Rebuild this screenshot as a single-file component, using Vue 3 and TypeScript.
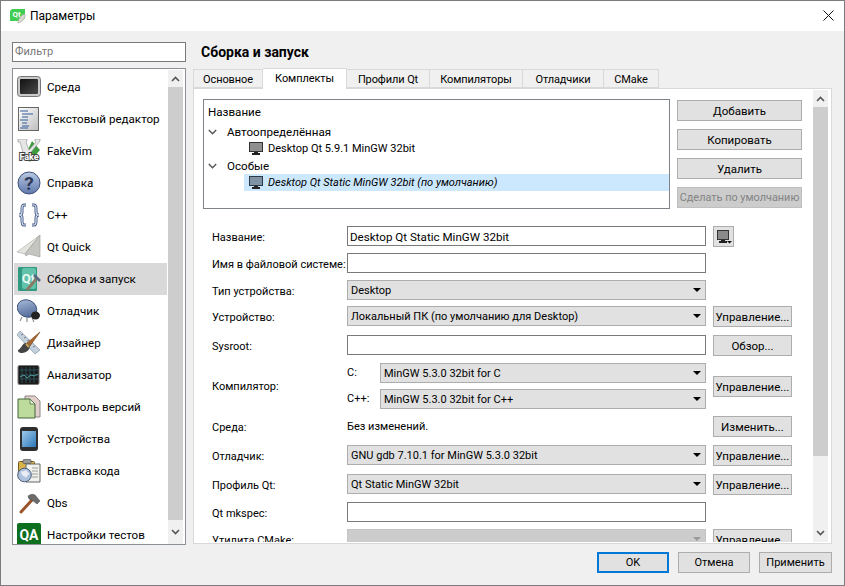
<template>
  <div class="window">
    <div class="titlebar">
      <svg class="app-icon" width="16" height="16" viewBox="0 0 16 16">
        <path d="M2 1h13v9l-3 3H0V3z" fill="#41cd52" />
        <text x="2.5" y="9" class="app-icon-text">Qt</text>
        <path d="M15 6c1 3-2 8-7 9 0-4 3-8 7-9z" fill="#d8d8d0" stroke="#a9a9a0" stroke-width=".6" />
      </svg>
      <span class="title">Параметры</span>
      <svg class="close" width="11" height="11" viewBox="0 0 11 11">
        <path d="M.5.5l10 10M10.5.5l-10 10" stroke="#111" stroke-width="1" fill="none" />
      </svg>
    </div>

    <div class="main">
      <aside class="side">
        <div class="filter">Фильтр</div>
        <div class="cat-list">
          <div class="cat-items">
            <div v-for="c in categories" :key="c.id" class="cat" :class="{ on: c.id === 'build' }">
              <svg class="cat-icon" width="24" height="24" viewBox="0 0 24 24">
                <template v-if="c.id === 'env'">
                  <defs>
                    <linearGradient id="g-env" x1="0" y1="0" x2="1" y2="1">
                      <stop offset="0" stop-color="#111" />
                      <stop offset="1" stop-color="#4a4a4a" />
                    </linearGradient>
                  </defs>
                  <rect x=".5" y="1.5" width="23" height="20" rx="3" fill="#c9c9c9" stroke="#777" />
                  <rect x="3" y="4" width="18" height="15" rx="1" fill="url(#g-env)" />
                </template>
                <template v-else-if="c.id === 'text'">
                  <defs>
                    <linearGradient id="g-doc" x1="0" y1="0" x2="1" y2="1">
                      <stop offset="0" stop-color="#fff" />
                      <stop offset="1" stop-color="#bdbdbd" />
                    </linearGradient>
                  </defs>
                  <rect x="1.5" y=".5" width="20" height="23" fill="url(#g-doc)" stroke="#666" />
                  <path d="M3 4h8M5 7h11M5 10h6M3 13h8M5 16h5M5 19h7M3 21h8" stroke="#2f5c9e" stroke-width="1" fill="none" />
                </template>
                <template v-else-if="c.id === 'vim'">
                  <path d="M15 2l8 9-10 12-5-6z" fill="#3f9b3f" />
                  <path d="M1 0h9v2L9 3l3 8 7-8-1-1V0h5v2L11 17H7L3 3H1z" fill="#e6e6e6" stroke="#8a8a8a" stroke-width=".6" />
                  <text x="12" y="21" class="fake-text">Fake</text>
                </template>
                <template v-else-if="c.id === 'help'">
                  <defs>
                    <linearGradient id="g-help" x1="0" y1="0" x2="0" y2="1">
                      <stop offset="0" stop-color="#b9c8e2" />
                      <stop offset="1" stop-color="#5f78ad" />
                    </linearGradient>
                  </defs>
                  <circle cx="12" cy="12" r="11" fill="url(#g-help)" stroke="#3f5178" />
                  <text x="12" y="19" class="help-text">?</text>
                </template>
                <template v-else-if="c.id === 'cpp'">
                  <path d="M9 2H7C5 2 5 4 5 6v3c0 2-1 3-3 3 2 0 3 1 3 3v3c0 2 0 4 2 4h2" fill="none" stroke="#495d88" stroke-width="3" />
                  <path d="M9 2H7C5 2 5 4 5 6v3c0 2-1 3-3 3 2 0 3 1 3 3v3c0 2 0 4 2 4h2" fill="none" stroke="#d5deee" stroke-width="1.2" />
                  <path d="M15 2h2c2 0 2 2 2 4v3c0 2 1 3 3 3-2 0-3 1-3 3v3c0 2 0 4-2 4h-2" fill="none" stroke="#495d88" stroke-width="3" />
                  <path d="M15 2h2c2 0 2 2 2 4v3c0 2 1 3 3 3-2 0-3 1-3 3v3c0 2 0 4-2 4h-2" fill="none" stroke="#d5deee" stroke-width="1.2" />
                </template>
                <template v-else-if="c.id === 'quick'">
                  <path d="M23 0L0 17l8 2z" fill="#e4e4df" stroke="#a8a8a4" stroke-width=".6" />
                  <path d="M23 0L8 19l1 2 3-2 11 3z" fill="#c4c4c0" stroke="#9b9b97" stroke-width=".6" />
                </template>
                <template v-else-if="c.id === 'build'">
                  <rect x="1" y="0" width="19" height="24" rx="1" fill="#2f9a80" />
                  <rect x="5" y="1" width="14" height="21" rx="2" fill="#62c2aa" />
                  <text x="11.5" y="16" class="qt-text">Qt</text>
                  <path d="M10 23L20 11" stroke="#8a7a68" stroke-width="3" />
                  <path d="M17 8l6 6" stroke="#55687f" stroke-width="2.6" />
                </template>
                <template v-else-if="c.id === 'debug'">
                  <defs>
                    <linearGradient id="g-bug" x1="0" y1="0" x2="1" y2="1">
                      <stop offset="0" stop-color="#b2c3e0" />
                      <stop offset="1" stop-color="#415a8c" />
                    </linearGradient>
                  </defs>
                  <path d="M5 18l-2 4M10 19l0 4M15 19l2 4" stroke="#777" fill="none" />
                  <ellipse cx="10" cy="9.5" rx="10" ry="8.5" fill="url(#g-bug)" stroke="#33476f" stroke-width=".8" transform="rotate(25 10 9.5)" />
                  <ellipse cx="18.5" cy="16.5" rx="4.5" ry="4" fill="#222" />
                </template>
                <template v-else-if="c.id === 'designer'">
                  <path d="M3 0L0 4 18 23l5-4z" fill="#c3d1dd" stroke="#8796a5" stroke-width=".7" />
                  <path d="M4 4l2-1M7 7l2-1M10 10l2-1M13 13l2-1M16 16l2-1" stroke="#667" stroke-width=".8" />
                  <path d="M23 1L10 12l3 3z" fill="#a8672e" stroke="#6e3f16" stroke-width=".6" />
                  <path d="M9 12c-4 0-4 5-8 7 0 3 2 3 4 3 5 0 8-4 8-7z" fill="#444" />
                  <path d="M9 13l3 3" stroke="#c6a357" stroke-width="2" />
                </template>
                <template v-else-if="c.id === 'analyzer'">
                  <rect x="1" y="2.5" width="21" height="19" rx="1.5" fill="#1c1c1c" stroke="#777" />
                  <path d="M5 4v16M9 4v16M13 4v16M17 4v16M3 7h18M3 12h18M3 16h18" stroke="#2e5a66" stroke-width=".8" fill="none" />
                  <path d="M3 14l4-2 3 3 4-3 3 1 4-2" stroke="#59a7a7" stroke-width=".9" fill="none" />
                </template>
                <template v-else-if="c.id === 'vcs'">
                  <path d="M8 1h10l5 5v16H8z" fill="#e2cfcc" stroke="#8f8585" />
                  <path d="M1 4h12l5 5v14H1z" fill="#bcdb9c" stroke="#44663a" />
                  <path d="M13 4v5h5z" fill="#e6f2d8" stroke="#44663a" stroke-width=".7" />
                </template>
                <template v-else-if="c.id === 'devices'">
                  <defs>
                    <linearGradient id="g-phone" x1="0" y1="0" x2="1" y2="1">
                      <stop offset="0" stop-color="#9fc9ea" />
                      <stop offset="1" stop-color="#2c78b9" />
                    </linearGradient>
                  </defs>
                  <rect x="3" y="0" width="18" height="24" rx="3" fill="#2e2e2e" />
                  <rect x="5" y="4" width="14" height="16" fill="url(#g-phone)" />
                </template>
                <template v-else-if="c.id === 'snippets'">
                  <rect x="1.5" y="2.5" width="16" height="17" rx="1" fill="#d9b348" stroke="#6e5a24" />
                  <rect x="6" y="0.5" width="8" height="4" rx="1" fill="#9a9a9a" stroke="#555" stroke-width=".7" />
                  <path d="M9 5h14v18H9z" fill="#f1f1ee" stroke="#666" />
                  <path d="M15 9h6M15 12h6M15 15h6M15 18h6" stroke="#888" stroke-width=".8" />
                  <circle cx="7.5" cy="16" r="6.8" fill="#aec2de" stroke="#4b5a76" />
                  <path d="M3 12c3 1 5 0 6-1 1 2 3 3 4 4-2 0-3 2-4 4-1-2-5-2-5-7z" fill="#e9eef5" />
                </template>
                <template v-else-if="c.id === 'qbs'">
                  <path d="M4 21L15 9" stroke="#99552a" stroke-width="3" stroke-linecap="round" />
                  <path d="M11 5c3-2 5-2 7-1l5 6-3 3-5-4-3-1z" fill="#6b6b6b" stroke="#444" stroke-width=".5" />
                </template>
                <template v-else>
                  <rect x="0" y="0" width="24" height="24" rx="2" fill="#0c6e1f" />
                  <text x="12" y="17" class="qa-text">QA</text>
                </template>
              </svg>
              <span>{{ c.label }}</span>
            </div>
          </div>
          <div class="vbar cat-bar">
            <div class="arrow">
              <svg width="9" height="6" viewBox="0 0 9 6"><path d="M1 5l3.5-3.5L8 5" fill="none" stroke="#555" stroke-width="1.6" /></svg>
            </div>
            <div class="thumb"></div>
            <div class="arrow low">
              <svg width="9" height="6" viewBox="0 0 9 6"><path d="M1 1l3.5 3.5L8 1" fill="none" stroke="#555" stroke-width="1.6" /></svg>
            </div>
          </div>
        </div>
      </aside>

      <section class="page">
        <h1 class="page-title">Сборка и запуск</h1>
        <div class="tabs">
          <div
            v-for="t in tabs"
            :key="t.label"
            class="tab"
            :class="{ active: t.label === 'Комплекты' }"
            :style="{ width: t.width + 'px' }"
          >{{ t.label }}</div>
        </div>

        <div class="panel">
          <div class="scroll">
            <div class="kits">
              <div class="tree">
                <div class="tree-head">Название</div>
                <div class="tree-row">
                  <svg class="chev" width="9" height="6" viewBox="0 0 9 6"><path d="M.8 1l3.7 3.7L8.2 1" fill="none" stroke="#555" stroke-width="1.4" /></svg>
                  <span>Автоопределённая</span>
                </div>
                <div class="tree-row leaf">
                  <svg class="mon" width="14" height="13" viewBox="0 0 14 13">
                    <rect x=".5" y=".5" width="13" height="9" fill="#8f8f8f" stroke="#333" />
                    <path d="M5 10h4v1H5zM3 11h8v2H3z" fill="#222" />
                  </svg>
                  <span>Desktop Qt 5.9.1 MinGW 32bit</span>
                </div>
                <div class="tree-row">
                  <svg class="chev" width="9" height="6" viewBox="0 0 9 6"><path d="M.8 1l3.7 3.7L8.2 1" fill="none" stroke="#555" stroke-width="1.4" /></svg>
                  <span>Особые</span>
                </div>
                <div class="tree-row leaf sel">
                  <svg class="mon" width="14" height="13" viewBox="0 0 14 13">
                    <rect x=".5" y=".5" width="13" height="9" fill="#7f93a6" stroke="#2e3a46" />
                    <path d="M5 10h4v1H5zM3 11h8v2H3z" fill="#222" />
                  </svg>
                  <span>Desktop Qt Static MinGW 32bit (по умолчанию)</span>
                </div>
              </div>
              <div class="kit-buttons">
                <div class="btn">Добавить</div>
                <div class="btn">Копировать</div>
                <div class="btn">Удалить</div>
                <div class="btn off">Сделать по умолчанию</div>
              </div>
            </div>

            <div class="form">
              <div class="row p27">
                <label>Название:</label>
                <div class="input">Desktop Qt Static MinGW 32bit</div>
                <div class="btn icon-btn">
                  <svg width="16" height="15" viewBox="0 0 16 15">
                    <rect x="1.5" y="1.5" width="11" height="9" fill="#8a8a8a" stroke="#333" />
                    <path d="M5 11h4v1H5zM3 12h8v2H3z" fill="#222" />
                    <path d="M11 12h5l-2.5 2.5z" fill="#111" />
                  </svg>
                </div>
              </div>
              <div class="row p27">
                <label>Имя в файловой системе:</label>
                <div class="input"></div>
              </div>
              <div class="row p26">
                <label>Тип устройства:</label>
                <div class="combo">Desktop<i></i></div>
              </div>
              <div class="row p29">
                <label>Устройство:</label>
                <div class="combo">Локальный ПК (по умолчанию для Desktop)<i></i></div>
                <div class="btn side-btn">Управление...</div>
              </div>
              <div class="row p28">
                <label>Sysroot:</label>
                <div class="input"></div>
                <div class="btn side-btn">Обзор...</div>
              </div>
              <div class="row compiler">
                <label>Компилятор:</label>
                <div class="subs">
                  <div class="sub">
                    <span>C:</span>
                    <div class="combo">MinGW 5.3.0 32bit for C<i></i></div>
                  </div>
                  <div class="sub">
                    <span>C++:</span>
                    <div class="combo">MinGW 5.3.0 32bit for C++<i></i></div>
                  </div>
                </div>
                <div class="btn side-btn">Управление...</div>
              </div>
              <div class="row p29">
                <label>Среда:</label>
                <div class="plain">Без изменений.</div>
                <div class="btn side-btn">Изменить...</div>
              </div>
              <div class="row p29">
                <label>Отладчик:</label>
                <div class="combo">GNU gdb 7.10.1 for MinGW 5.3.0 32bit<i></i></div>
                <div class="btn side-btn">Управление...</div>
              </div>
              <div class="row p28">
                <label>Профиль Qt:</label>
                <div class="combo">Qt Static MinGW 32bit<i></i></div>
                <div class="btn side-btn">Управление...</div>
              </div>
              <div class="row p27">
                <label>Qt mkspec:</label>
                <div class="input"></div>
              </div>
              <div class="row p27">
                <label>Утилита CMake:</label>
                <div class="combo dis"><i></i></div>
                <div class="btn side-btn">Управление...</div>
              </div>
            </div>
          </div>
          <div class="vbar page-bar">
            <div class="arrow">
              <svg width="9" height="6" viewBox="0 0 9 6"><path d="M1 5l3.5-3.5L8 5" fill="none" stroke="#555" stroke-width="1.6" /></svg>
            </div>
            <div class="thumb"></div>
            <div class="arrow low">
              <svg width="9" height="6" viewBox="0 0 9 6"><path d="M1 1l3.5 3.5L8 1" fill="none" stroke="#555" stroke-width="1.6" /></svg>
            </div>
          </div>
        </div>
      </section>
    </div>

    <div class="footer">
      <div class="btn foot primary">OK</div>
      <div class="btn foot">Отмена</div>
      <div class="btn foot">Применить</div>
    </div>
  </div>
</template>

<script setup lang="ts">
interface Category {
  id: string
  label: string
}

interface Tab {
  label: string
  width: number
}

const categories: Category[] = [
  { id: 'env', label: 'Среда' },
  { id: 'text', label: 'Текстовый редактор' },
  { id: 'vim', label: 'FakeVim' },
  { id: 'help', label: 'Справка' },
  { id: 'cpp', label: 'C++' },
  { id: 'quick', label: 'Qt Quick' },
  { id: 'build', label: 'Сборка и запуск' },
  { id: 'debug', label: 'Отладчик' },
  { id: 'designer', label: 'Дизайнер' },
  { id: 'analyzer', label: 'Анализатор' },
  { id: 'vcs', label: 'Контроль версий' },
  { id: 'devices', label: 'Устройства' },
  { id: 'snippets', label: 'Вставка кода' },
  { id: 'qbs', label: 'Qbs' },
  { id: 'tests', label: 'Настройки тестов' },
]

const tabs: Tab[] = [
  { label: 'Основное', width: 70 },
  { label: 'Комплекты', width: 84 },
  { label: 'Профили Qt', width: 83 },
  { label: 'Компиляторы', width: 93 },
  { label: 'Отладчики', width: 81 },
  { label: 'CMake', width: 55 },
]
</script>

<style>
html,
body {
  margin: 0;
  background: #f0f0f0;
}
</style>

<style scoped>
.window {
  box-sizing: border-box;
  display: flex;
  flex-direction: column;
  width: 845px;
  height: 586px;
  border: 1px solid #7c7c7c;
  background: #f0f0f0;
  color: #000;
  font-family: Roboto, "Noto Sans", sans-serif;
  font-size: 11px;
  line-height: 16px;
  overflow: hidden;
}

.titlebar {
  display: flex;
  align-items: center;
  flex: none;
  box-sizing: border-box;
  height: 30px;
  padding: 0 10px 1px 9px;
  background: #fff;
}

.app-icon {
  margin-right: 4px;
}

.app-icon-text {
  fill: #fff;
  font-size: 8px;
  font-weight: 700;
}

.title {
  flex: 1;
  font-size: 12px;
}

.main {
  display: flex;
  flex: none;
  height: 514px;
}

.side {
  display: flex;
  flex-direction: column;
  flex: none;
  width: 174px;
  margin: 11px 0 0 11px;
}

.filter {
  box-sizing: border-box;
  height: 20px;
  padding: 1px 2px;
  border: 1px solid #7a7a7a;
  background: #fff;
  color: #777;
}

.cat-list {
  position: relative;
  display: flex;
  box-sizing: border-box;
  height: 477px;
  margin-top: 6px;
  border: 1px solid #8b9097;
  background: #fff;
  overflow: hidden;
}

.cat-items {
  flex: none;
  width: 153px;
  margin-left: 1px;
  padding-top: 2px;
}

.cat {
  display: flex;
  align-items: center;
  height: 32px;
  padding-left: 3px;
  font-size: 11.6px;
}

.cat.on {
  background: #d9d9d9;
}

.cat-icon {
  flex: none;
  margin-right: 6px;
}

.fake-text {
  fill: #fff;
  stroke: #444;
  stroke-width: 2px;
  paint-order: stroke;
  font-size: 9px;
  font-weight: 700;
  text-anchor: middle;
}

.help-text {
  fill: #2d3a58;
  font-size: 19px;
  font-weight: 700;
  text-anchor: middle;
}

.qt-text {
  fill: #e8f8f3;
  font-size: 13px;
  font-weight: 700;
  text-anchor: middle;
}

.qa-text {
  fill: #fff;
  font-size: 14px;
  font-weight: 700;
  text-anchor: middle;
}

.vbar {
  display: flex;
  flex-direction: column;
  background: #f0f0f0;
}

.cat-bar {
  flex: none;
  width: 15px;
  margin: 1px 2px 0 1px;
}

.arrow {
  display: flex;
  align-items: center;
  justify-content: center;
  flex: none;
  height: 17px;
}

.arrow.low {
  height: 24px;
}

.thumb {
  flex: 1;
  background: #cdcdcd;
}

.page {
  display: flex;
  flex-direction: column;
  width: 639px;
  margin-left: 7px;
}

.page-title {
  height: 37px;
  margin: 0;
  padding: 12px 0 0 8px;
  box-sizing: border-box;
  font-size: 14px;
  font-weight: 700;
  line-height: 18px;
}

.tabs {
  display: flex;
  align-items: flex-end;
  height: 21px;
  position: relative;
  z-index: 1;
}

.tab {
  box-sizing: border-box;
  flex: none;
  height: 19px;
  margin-bottom: 1px;
  padding-top: 1px;
  border: 1px solid #d9d9d9;
  border-left-width: 0;
  background: #f0f0f0;
  line-height: 17px;
  text-align: center;
  letter-spacing: -0.1px;
}

.tab:first-child {
  border-left-width: 1px;
}

.tab.active {
  height: 21px;
  margin-bottom: 0;
  border-bottom: 0;
  background: #fff;
  line-height: 18px;
}

.panel {
  display: flex;
  box-sizing: border-box;
  height: 456px;
  margin-top: -1px;
  border: 1px solid #d9d9d9;
  background: #fff;
}

.scroll {
  flex: none;
  box-sizing: border-box;
  width: 619px;
  height: 453px;
  padding: 10px 0 0 9px;
  overflow: hidden;
}

.page-bar {
  flex: none;
  width: 15px;
  height: 452px;
  margin-top: 1px;
}

.page-bar .thumb {
  flex: none;
  height: 349px;
}

.page-bar .arrow.low {
  flex: 1;
  align-items: flex-end;
  padding-bottom: 6px;
}

.kits {
  display: flex;
  gap: 7px;
}

.tree {
  box-sizing: border-box;
  flex: none;
  width: 467px;
  height: 110px;
  border: 1px solid #7f848b;
  background: #fff;
  font-size: 11.6px;
}

.tree-head {
  height: 23px;
  padding-left: 4px;
  line-height: 24px;
}

.tree-row {
  display: flex;
  align-items: center;
  height: 17px;
  padding-left: 4px;
}

.chev {
  flex: none;
  margin-right: 10px;
}

.tree-row.leaf {
  padding-left: 45px;
  font-size: 11px;
}

.mon {
  flex: none;
  margin-right: 5px;
}

.tree-row.sel {
  margin-left: 40px;
  padding-left: 5px;
  background: #cce8ff;
  font-style: italic;
}

.kit-buttons {
  display: flex;
  flex-direction: column;
  flex: none;
  gap: 8px;
  width: 125px;
  padding-top: 1px;
}

.btn {
  display: flex;
  align-items: center;
  justify-content: center;
  box-sizing: border-box;
  flex: none;
  height: 21px;
  padding-top: 1px;
  border: 1px solid #adadad;
  background: #e1e1e1;
  font-size: 11.5px;
  white-space: nowrap;
}

.btn.off {
  border-color: #bfbfbf;
  background: #cccccc;
  color: #838383;
  font-size: 10.9px;
}

.form {
  margin-top: 17px;
  padding-left: 9px;
}

.row {
  display: flex;
  align-items: flex-start;
}

.p26 {
  height: 26px;
}

.p27 {
  height: 27px;
}

.p28 {
  height: 28px;
}

.p29 {
  height: 29px;
}

.row label {
  flex: none;
  width: 135px;
  line-height: 23px;
  white-space: nowrap;
}

.input,
.combo {
  position: relative;
  box-sizing: border-box;
  flex: none;
  width: 359px;
  height: 20px;
  line-height: 19px;
  white-space: nowrap;
}

.input {
  padding-left: 2px;
  border: 1px solid #7a7a7a;
  background: #fff;
  font-size: 11.6px;
  line-height: 20px;
}

.combo {
  padding-left: 3px;
  border: 1px solid #adadad;
  background: #e1e1e1;
}

.combo i {
  position: absolute;
  top: 7px;
  right: 4px;
  width: 0;
  height: 0;
  border-top: 4px solid #000;
  border-right: 4px solid transparent;
  border-left: 4px solid transparent;
}

.combo.dis {
  border-color: #c4c4c4;
  background: #cccccc;
}

.combo.dis i {
  border-top-color: #999;
}

.plain {
  flex: none;
  width: 359px;
  line-height: 22px;
}

.side-btn {
  width: 79px;
  margin-left: 7px;
}

.icon-btn {
  width: 21px;
  margin-left: 7px;
  padding-top: 0;
}

.compiler {
  align-items: center;
  height: 53px;
  padding-bottom: 7px;
  box-sizing: border-box;
}

.subs {
  display: flex;
  flex-direction: column;
  gap: 6px;
  flex: none;
  width: 359px;
}

.sub {
  display: flex;
  line-height: 20px;
}

.sub span {
  flex: none;
  width: 33px;
}

.sub .combo {
  width: 326px;
  line-height: 19px;
}

.footer {
  display: flex;
  justify-content: flex-end;
  gap: 9px;
  padding: 7px 12px 0 0;
}

.foot {
  width: 72px;
  font-size: 11px;
}

.foot:last-child {
  width: 73px;
}

.foot.primary {
  border: 2px solid #0078d7;
}
</style>
